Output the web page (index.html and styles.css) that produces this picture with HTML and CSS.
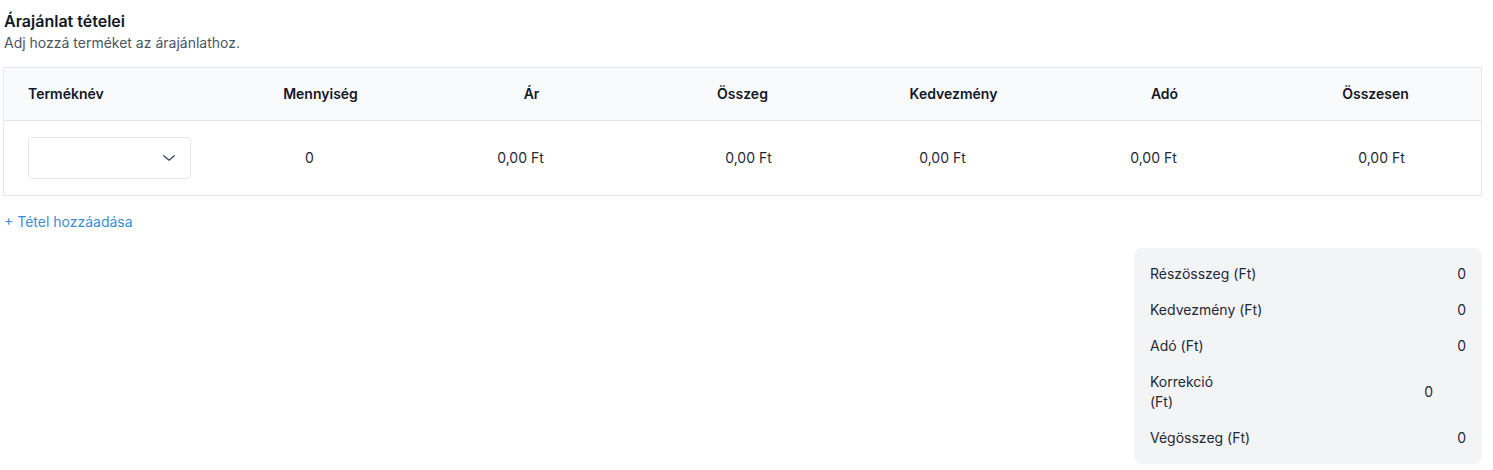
FILE: index.html
```html
<!DOCTYPE html>
<html lang="hu">
<head>
  <meta charset="UTF-8" />
  <meta name="viewport" content="width=device-width, initial-scale=1.0" />
  <title>Árajánlat tételei</title>
  <link rel="stylesheet" href="styles.css">
</head>
<body>

  <div class="quote-items">
    <!-- Header -->
    <h2 class="section-title">Árajánlat tételei</h2>
    <p class="section-subtitle">Adj hozzá terméket az árajánlathoz.</p>

    <!-- Items table -->
    <div class="table-wrap">
      <table class="items-table">
        <thead>
          <tr>
            <th class="col-name">Terméknév</th>
            <th>Mennyiség</th>
            <th>Ár</th>
            <th>Összeg</th>
            <th>Kedvezmény</th>
            <th>Adó</th>
            <th>Összesen</th>
          </tr>
        </thead>
        <tbody>
          <tr>
            <td class="col-name">
              <div class="product-select">
                <svg width="18" height="18" viewBox="0 0 24 24" fill="none" stroke="#374151" stroke-width="1.6" stroke-linecap="round" stroke-linejoin="round"><path d="M5 9l7 6 7-6"/></svg>
              </div>
            </td>
            <td>0</td>
            <td>0,00 Ft</td>
            <td class="shift">0,00 Ft</td>
            <td>0,00 Ft</td>
            <td>0,00 Ft</td>
            <td class="shift">0,00 Ft</td>
          </tr>
        </tbody>
      </table>
    </div>

    <a href="#" class="add-item">+ Tétel hozzáadása</a>

    <!-- Totals -->
    <div class="summary-row">
      <div class="summary">
        <div class="summary-line">
          <span>Részösszeg (Ft)</span>
          <span>0</span>
        </div>
        <div class="summary-line">
          <span>Kedvezmény (Ft)</span>
          <span>0</span>
        </div>
        <div class="summary-line">
          <span>Adó (Ft)</span>
          <span>0</span>
        </div>
        <div class="summary-line correction">
          <span class="correction-label">Korrekció (Ft)</span>
          <span class="correction-value">0</span>
        </div>
        <div class="summary-line">
          <span>Végösszeg (Ft)</span>
          <span>0</span>
        </div>
      </div>
    </div>
  </div>

</body>
</html>
```

FILE: styles.css
```css
body {
  font-family: Inter, 'Noto Sans', sans-serif;
  background-color: #ffffff;
  color: #1f2937;
  margin: 0;
  padding: 0;
}

.quote-items {
  padding: 9px 11px 0 3px;
}

.section-title {
  font-size: 16px;
  line-height: 24px;
  font-weight: 600;
  color: #111827;
  margin: 0 0 0 1px;
}
.section-subtitle {
  font-size: 14px;
  line-height: 20px;
  color: #4b5563;
  margin: 0 0 14px 1px;
}

/* Table */
.table-wrap {
  border: 1px solid #e5e7eb;
}
.items-table {
  width: 100%;
  border-collapse: collapse;
  table-layout: fixed;
  font-size: 14px;
  line-height: 20px;
}
.items-table th {
  background-color: #f9fafb;
  color: #111827;
  font-weight: 600;
  padding: 16px 24px;
  text-align: center;
  border-bottom: 1px solid #e5e7eb;
}
.items-table td {
  padding: 16px 22px 16px 0;
  text-align: center;
  color: #1f2937;
}
.items-table td.shift {
  padding: 16px 0 16px 12px;
}
.items-table .col-name {
  text-align: left;
  padding-left: 24px;
  padding-right: 0;
}
.product-select {
  width: 163px;
  height: 42px;
  box-sizing: border-box;
  border: 1px solid #e5e7eb;
  border-radius: 4px;
  display: flex;
  align-items: center;
  justify-content: flex-end;
  padding-right: 12px;
}

.add-item {
  display: inline-block;
  margin: 16px 0 0 1px;
  font-size: 14px;
  line-height: 20px;
  color: #3b8ed3;
  text-decoration: none;
}

/* Summary */
.summary-row {
  display: flex;
  justify-content: flex-end;
  margin-top: 16px;
}
.summary {
  width: 348px;
  box-sizing: border-box;
  background-color: #f3f4f6;
  border-radius: 8px;
  padding: 16px;
  display: flex;
  flex-direction: column;
  gap: 16px;
  font-size: 14px;
  line-height: 20px;
  color: #1f2937;
}
.summary-line {
  display: flex;
  justify-content: space-between;
  align-items: center;
}
.correction-label {
  width: 80px;
}
.correction-value {
  padding-right: 33px;
}
```
